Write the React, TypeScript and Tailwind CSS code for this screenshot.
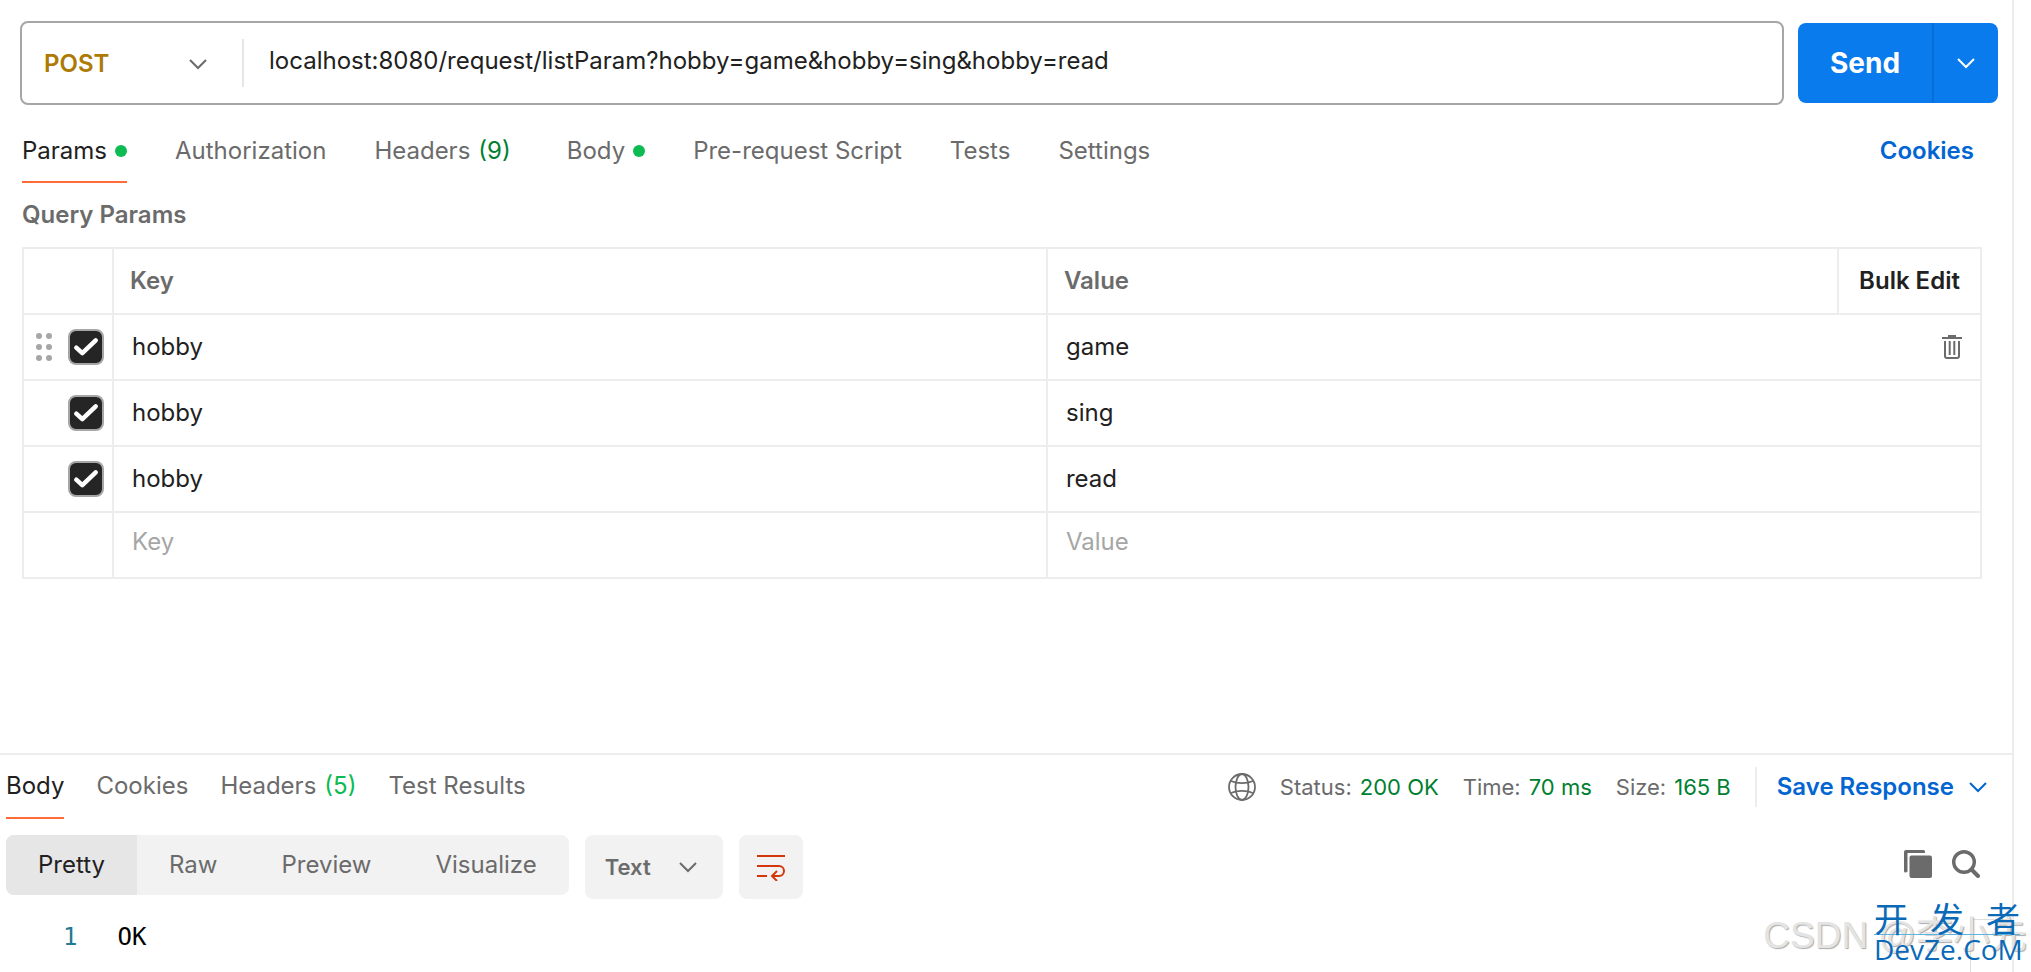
import React, { useState } from 'react';

const paramRows = [
  { key: 'hobby', value: 'game' },
  { key: 'hobby', value: 'sing' },
  { key: 'hobby', value: 'read' },
];

const requestTabs = [
  { label: 'Params', dot: true },
  { label: 'Authorization' },
  { label: 'Headers', count: 9 },
  { label: 'Body', dot: true },
  { label: 'Pre-request Script' },
  { label: 'Tests' },
  { label: 'Settings' },
];

const responseTabs = [
  { label: 'Body' },
  { label: 'Cookies' },
  { label: 'Headers', count: 5 },
  { label: 'Test Results' },
];

const responseStats = [
  { label: 'Status:', value: '200 OK' },
  { label: 'Time:', value: '70 ms' },
  { label: 'Size:', value: '165 B' },
];

const viewModes = ['Pretty', 'Raw', 'Preview', 'Visualize'];

const Chevron: React.FC<{ className?: string }> = ({ className }) => (
  <svg className={className} width="18" height="12" viewBox="0 0 18 12" fill="none" stroke="currentColor" strokeWidth="2">
    <path d="M1 2l8 8 8-8" />
  </svg>
);

const GlobeIcon = () => (
  <svg width="28" height="28" viewBox="0 0 28 28" fill="none" stroke="currentColor" strokeWidth="1.8">
    <circle cx="14" cy="14" r="13" />
    <ellipse cx="14" cy="14" rx="6.5" ry="13" />
    <path d="M3 8c3 1.500 7 2.200 11 2.200s8-.7 11-2.200M3 20c3-1.500 7-2.200 11-2.200s8 .7 11 2.200" />
  </svg>
);

const TrashIcon = () => (
  <svg width="20" height="24" viewBox="0 0 20 24" fill="none" stroke="currentColor" strokeWidth="2">
    <path d="M0 3h20M6 1h8M3 6v15q0 2 2 2h10q2 0 2-2V6M7.700 6v14M12.300 6v14" />
  </svg>
);

const WrapIcon = () => (
  <svg width="28" height="28" viewBox="0 0 28 28" fill="none" stroke="currentColor" strokeWidth="2">
    <path d="M0 3h28M0 13h22a5 5 0 0 1 0 10H15.500M0 23h10M20 18l-5 5 5 5" />
  </svg>
);

const CopyIcon = () => (
  <svg width="28" height="28" viewBox="0 0 28 28" fill="currentColor">
    <path d="M2 0h17.500q1.500 0 1.500 1.500V3H3.500v18.500L2 22.500H1.500Q0 22.500 0 21V2Q0 0 2 0Z" />
    <rect x="5.500" y="5.500" width="22.500" height="22.500" rx="2" />
  </svg>
);

const SearchIcon = () => (
  <svg width="28" height="28" viewBox="0 0 28 28" fill="none" stroke="currentColor">
    <circle cx="12" cy="12" r="10.300" strokeWidth="3.400" />
    <path d="m19.500 19.500 6.500 6.500" strokeWidth="4" strokeLinecap="round" />
  </svg>
);

const DragHandle = () => (
  <svg width="16" height="28" viewBox="0 0 16 28" fill="#a6a6a6">
    {[3, 14, 25].map((y) => (
      <React.Fragment key={y}>
        <circle cx="3" cy={y} r="3" />
        <circle cx="13" cy={y} r="3" />
      </React.Fragment>
    ))}
  </svg>
);

const Checkbox: React.FC<{ label: string }> = ({ label }) => (
  <span className="relative block size-9">
    <input
      type="checkbox"
      defaultChecked
      aria-label={label}
      className="peer block size-9 appearance-none rounded-lg border-2 border-[#a6a6a6] checked:bg-[#252525]"
    />
    <svg
      className="pointer-events-none absolute inset-0 hidden peer-checked:block"
      viewBox="0 0 36 36"
      fill="none"
      stroke="#fff"
      strokeWidth="4.500"
      strokeLinecap="round"
      strokeLinejoin="round"
    >
      <path d="m8.300 18.700 6 5.500L27.700 11.300" />
    </svg>
  </span>
);

const RequestBar = () => (
  <div className="flex items-center gap-[14px] pt-[21px] pr-[14px] pl-5">
    <div className="flex h-[84px] flex-1 items-center rounded-lg border-2 border-[#a6a6a6]">
      <button className="flex w-[220px] items-center justify-between pt-[2px] pr-[35px] pl-[22px] font-semibold text-[#ad7a03]">
        POST
        <Chevron className="text-[#6b6b6b]" />
      </button>
      <div className="h-12 w-[2px] bg-[#e6e6e6]" />
      <input
        aria-label="Request URL"
        className="mb-1 flex-1 pl-[25px] text-[#212121] outline-none"
        defaultValue="localhost:8080/request/listParam?hobby=game&hobby=sing&hobby=read"
      />
    </div>
    <div className="flex h-20 w-[200px] overflow-hidden rounded-lg bg-[#097bed] text-white">
      <button className="flex-1 text-[28px] font-bold">Send</button>
      <button aria-label="Send options" className="flex w-[66px] items-center justify-center border-l-2 border-[#0a6fd4]">
        <Chevron />
      </button>
    </div>
  </div>
);

const RequestTabs = () => {
  const [active, setActive] = useState('Params');
  return (
    <div className="flex items-start justify-between pt-[30px] pr-[38px] pl-[22px]">
      <nav className="flex gap-12">
        {requestTabs.map((tab) => (
          <button
            key={tab.label}
            onClick={() => setActive(tab.label)}
            className={`flex h-12 items-start gap-2 border-b-2 ${
              tab.label === active ? 'border-[#ff6c37] text-[#212121]' : 'border-transparent text-[#6b6b6b]'
            }`}
          >
            {tab.label}
            {tab.dot && <span className="mt-[10px] size-3 rounded-full bg-[#0cbb52]" />}
            {tab.count && <span className="pr-2 text-[#007f31]">({tab.count})</span>}
          </button>
        ))}
      </nav>
      <a href="#cookies" className="font-semibold text-[#0265d2]">Cookies</a>
    </div>
  );
};

const ParamsTable = () => (
  <div className="pr-[30px] pl-[22px]">
    <h2 className="py-4 font-semibold text-[#6b6b6b]">Query Params</h2>
    <table className="w-full table-fixed border-collapse text-left text-[#212121] [&_td]:border-2 [&_td]:border-[#ededed] [&_th]:border-2 [&_th]:border-[#ededed]">
      <colgroup>
        <col className="w-[90px]" />
        <col />
        <col className="w-[40.4%]" />
        <col className="w-[143px]" />
      </colgroup>
      <thead>
        <tr className="h-[66px] text-[#6b6b6b]">
          <th aria-label="Enabled" />
          <th className="px-4 font-semibold">Key</th>
          <th className="px-4 font-semibold">Value</th>
          <th className="text-center">
            <button className="font-semibold text-[#212121]">Bulk Edit</button>
          </th>
        </tr>
      </thead>
      <tbody>
        {paramRows.map((row, i) => (
          <tr key={row.value} className="h-[66px]">
            <td className="px-2">
              <div className="flex items-center justify-end gap-4">
                {i === 0 && <DragHandle />}
                <Checkbox label={`Enable ${row.key}=${row.value}`} />
              </div>
            </td>
            <td className="px-[18px]">{row.key}</td>
            <td className="px-[18px]" colSpan={2}>
              <div className="flex items-center justify-between">
                {row.value}
                {i === 0 && (
                  <button aria-label="Delete row" className="text-[#6b6b6b]">
                    <TrashIcon />
                  </button>
                )}
              </div>
            </td>
          </tr>
        ))}
        <tr className="h-[66px]">
          <td />
          <td className="px-[18px] pb-[6px]">
            <input aria-label="New key" placeholder="Key" className="block w-full outline-none placeholder:text-[#a6a6a6]" />
          </td>
          <td className="px-[18px] pb-[6px]" colSpan={2}>
            <input aria-label="New value" placeholder="Value" className="block w-full outline-none placeholder:text-[#a6a6a6]" />
          </td>
        </tr>
      </tbody>
    </table>
  </div>
);

const ResponseHeader = () => {
  const [active, setActive] = useState('Body');
  return (
    <div className="flex items-start justify-between pr-[25px] pl-[6px]">
      <nav className="flex gap-8 pt-[15px]">
        {responseTabs.map((tab) => (
          <button
            key={tab.label}
            onClick={() => setActive(tab.label)}
            className={`flex h-[49px] items-start gap-2 border-b-2 ${
              tab.label === active ? 'border-[#ff6c37] text-[#212121]' : 'border-transparent text-[#6b6b6b]'
            }`}
          >
            {tab.label}
            {tab.count && <span className="text-[#0cbb52]">({tab.count})</span>}
          </button>
        ))}
      </nav>
      <div className="flex h-16 items-center gap-6 text-[22px] text-[#6b6b6b]">
        <GlobeIcon />
        {responseStats.map((stat) => (
          <span key={stat.label} className="flex gap-2">
            {stat.label}
            <span className="text-[#007f31]">{stat.value}</span>
          </span>
        ))}
        <button className="flex h-10 items-center gap-[15px] border-l-2 border-[#ededed] pl-5 text-2xl font-semibold text-[#0265d2]">
          Save Response
          <Chevron />
        </button>
      </div>
    </div>
  );
};

const ResponseToolbar = () => {
  const [mode, setMode] = useState('Pretty');
  return (
    <div className="flex items-start gap-4 pt-4 pr-8 pl-[6px] text-[#6b6b6b]">
      <div className="flex h-[60px] overflow-hidden rounded-lg bg-[#f2f2f2]">
        {viewModes.map((name) => (
          <button
            key={name}
            onClick={() => setMode(name)}
            className={`px-8 ${name === mode ? 'bg-[#e6e6e6] text-[#212121]' : ''}`}
          >
            {name}
          </button>
        ))}
      </div>
      <button className="flex h-16 items-center gap-7 rounded-lg bg-[#f2f2f2] pr-[26px] pl-5 text-[22px] font-semibold">
        Text
        <Chevron />
      </button>
      <button aria-label="Wrap lines" className="flex size-16 items-center justify-center rounded-lg bg-[#f2f2f2] text-[#d3380c]">
        <WrapIcon />
      </button>
      <div className="ml-auto flex gap-5 pt-[15px]">
        <button aria-label="Copy"><CopyIcon /></button>
        <button aria-label="Search"><SearchIcon /></button>
      </div>
    </div>
  );
};

const ResponseBody = () => (
  <div className="flex flex-1 pt-5 font-['DejaVu_Sans_Mono',monospace]">
    <div className="flex flex-1 gap-10 pt-[2px] pl-[63px]">
      <span className="text-[#237893]">1</span>
      <span className="text-black">OK</span>
    </div>
    {/* Minimap gutter */}
    <div className="w-[42px] border-t border-l border-[#dddddd]" />
  </div>
);

export default function App() {
  return (
    <div className="relative min-h-screen overflow-hidden bg-white pr-[17px] font-['Inter',sans-serif] text-2xl leading-8">
      <div className="flex min-h-screen flex-col border-r-2 border-[#ededed]">
        <div className="h-[753px]">
          <RequestBar />
          <RequestTabs />
          <ParamsTable />
        </div>
        <div className="flex flex-1 flex-col border-t-2 border-[#ededed]">
          <ResponseHeader />
          <ResponseToolbar />
          <ResponseBody />
        </div>
      </div>

      {/* Watermarks */}
      <div className="absolute right-1 bottom-3 font-['Liberation_Sans','Noto_Sans_CJK_SC',sans-serif] text-[37px] leading-12 whitespace-nowrap text-[#e4e4e4] [text-shadow:1px_1px_1px_#aaa]">
        CSDN @李小先
      </div>
      <div className="absolute right-[11px] bottom-[9px] w-[146px] text-[#0a6ab8]">
        <div className="flex justify-between border-b border-[#5bb5e0] font-['Noto_Sans_CJK_SC',sans-serif] text-[34px] leading-8">
          <span>开</span>
          <span>发</span>
          <span>者</span>
        </div>
        <div className="font-['Open_Sans',sans-serif] text-[28px] leading-7">DevZe.CoM</div>
      </div>
    </div>
  );
}
